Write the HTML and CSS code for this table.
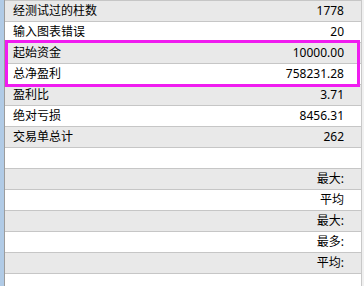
FILE: index.html
```html
<!DOCTYPE html>
<html lang="zh-CN">
<head>
    <meta charset="UTF-8">
    <meta name="viewport" content="width=device-width, initial-scale=1.0">
    <title>测试报告</title>
    <link rel="stylesheet" href="styles.css">
</head>
<body>

<div class="report">
    <div class="side-strip"></div>

    <div class="stats">
        <div class="row"><span class="label">经测试过的柱数</span><span class="value">1778</span></div>
        <div class="row"><span class="label">输入图表错误</span><span class="value">20</span></div>
        <div class="row"><span class="label">起始资金</span><span class="value">10000.00</span></div>
        <div class="row"><span class="label">总净盈利</span><span class="value">758231.28</span></div>
        <div class="row"><span class="label">盈利比</span><span class="value">3.71</span></div>
        <div class="row"><span class="label">绝对亏损</span><span class="value">8456.31</span></div>
        <div class="row"><span class="label">交易单总计</span><span class="value">262</span></div>
        <div class="row"><span class="label"></span><span class="value"></span></div>
        <div class="row"><span class="label"></span><span class="value">最大:</span></div>
        <div class="row"><span class="label"></span><span class="value">平均</span></div>
        <div class="row"><span class="label"></span><span class="value">最大:</span></div>
        <div class="row"><span class="label"></span><span class="value">最多:</span></div>
        <div class="row"><span class="label"></span><span class="value">平均:</span></div>
        <div class="row"><span class="label"></span><span class="value"></span></div>

        <!-- 高亮框：起始资金 / 总净盈利 -->
        <div class="highlight"></div>
    </div>
</div>

</body>
</html>
```

FILE: styles.css
```css
body {
    margin: 0;
    background-color: #f0f0f0;
    font-family: "Noto Sans", "Noto Sans CJK SC", sans-serif;
    font-size: 12px;
    color: #000;
    overflow: hidden;
}
.report {
    display: flex;
    height: 286px;
    overflow: hidden;
}
.side-strip {
    width: 4px;
    flex-shrink: 0;
    background-color: #b1cbe6;
    border-right: 1px solid #9c9c9c;
}
.stats {
    position: relative;
    width: 356px;
    border-right: 1px solid #c8c8c8;
    background-color: #fff;
}
.row {
    display: flex;
    justify-content: space-between;
    align-items: center;
    height: 20px;
    border-top: 1px solid #c6c6c6;
    padding: 0 17px 0 8px;
}
.row:nth-child(odd) {
    background-color: #e9e9e9;
}
.label, .value {
    line-height: 20px;
    white-space: nowrap;
}
.highlight {
    position: absolute;
    top: 40px;
    left: 0;
    width: 349px;
    height: 41px;
    border: 3px solid #f01cf0;
}
```
